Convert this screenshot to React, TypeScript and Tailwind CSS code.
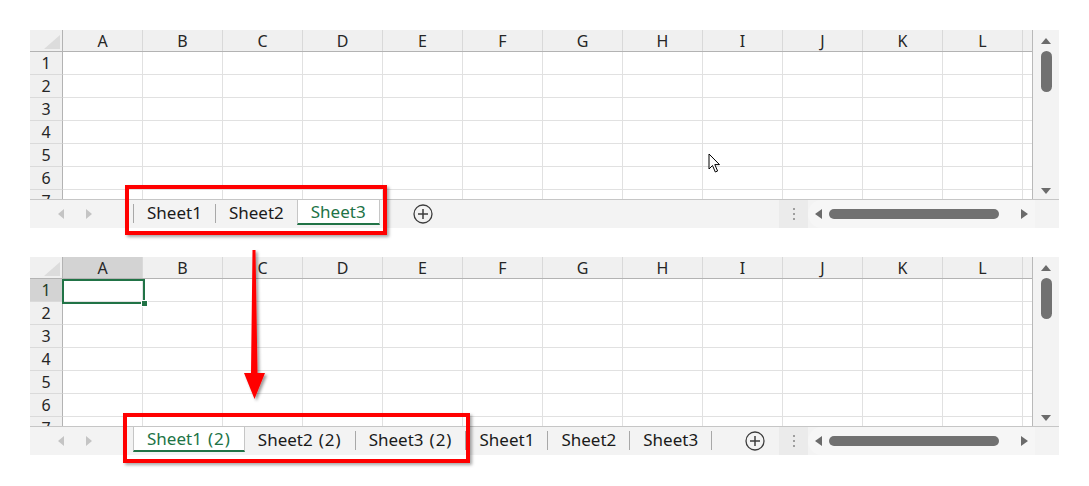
import React from "react";

const COLS = ["A", "B", "C", "D", "E", "F", "G", "H", "I", "J", "K", "L"];
const ROWS = [1, 2, 3, 4, 5, 6, 7];
const FONT = { fontFamily: '"Noto Sans", "Open Sans", Arial, sans-serif' };

type Tab = { name: string; suffix?: string; active?: boolean };

function Tri({ dir, color, w = 7, h = 9 }: { dir: "l" | "r" | "u" | "d"; color: string; w?: number; h?: number }) {
  const pts =
    dir === "l"
      ? `${w},0 ${w},${h} 0,${h / 2}`
      : dir === "r"
      ? `0,0 0,${h} ${w},${h / 2}`
      : dir === "u"
      ? `0,${h} ${w},${h} ${w / 2},0`
      : `0,0 ${w},0 ${w / 2},${h}`;
  return (
    <svg width={w} height={h} viewBox={`0 0 ${w} ${h}`} className="block shrink-0">
      <polygon points={pts} fill={color} />
    </svg>
  );
}

function VScroll() {
  return (
    <div className="w-[26px] shrink-0 bg-[#f3f3f3] flex flex-col items-center pt-[8px] pb-[5px]">
      <Tri dir="u" color="#6b6b6b" w={10} h={6} />
      <div className="mt-[7px] w-[11px] h-[41px] rounded-full bg-[#717171]" />
      <div className="mt-auto">
        <Tri dir="d" color="#6b6b6b" w={10} h={6} />
      </div>
    </div>
  );
}

function Grid({ selected }: { selected?: boolean }) {
  return (
    <div className="relative flex-1 h-[169px] overflow-hidden border-r border-[#b9b9b9] bg-white">
      <div className="flex h-[22px] bg-[#f0f0f0] border-b border-[#b3b3b3]">
        <div className="relative w-[33px] shrink-0 border-r border-[#b3b3b3]">
          <svg width="16" height="14" className="absolute right-[2px] bottom-[2px]">
            <polygon points="16,0 16,14 0,14" fill="#dcdcdc" />
          </svg>
        </div>
        {COLS.map((c) => (
          <div
            key={c}
            className={`w-[80px] shrink-0 border-r border-[#d9d9d9] flex items-center justify-center text-[16px] leading-none text-[#262626] ${
              selected && c === "A" ? "bg-[#d3d3d3]" : ""
            }`}
          >
            {c}
          </div>
        ))}
        <div className="flex-1" />
      </div>
      {ROWS.map((r) => (
        <div key={r} className="flex h-[23px]">
          <div
            className={`w-[33px] shrink-0 border-r border-b border-r-[#b3b3b3] border-b-[#dadada] flex items-center justify-center text-[16px] leading-none ${
              selected && r === 1 ? "bg-[#d3d3d3] text-[#1f3d26]" : "bg-[#f0f0f0] text-[#262626]"
            }`}
          >
            {r}
          </div>
          {COLS.map((c) => (
            <div key={c} className="w-[80px] shrink-0 border-r border-b border-[#e1e1e1]" />
          ))}
          <div className="flex-1 border-b border-[#e1e1e1]" />
        </div>
      ))}
      {selected && (
        <div className="absolute left-[32px] top-[22px] w-[83px] h-[25px] border-2 border-[#217346]">
          <div className="absolute right-[-5px] bottom-[-5px] w-[7px] h-[7px] bg-[#217346] border border-white" />
        </div>
      )}
    </div>
  );
}

function Sep() {
  return <div className="w-px h-[19px] mt-[4px] bg-[#a8a8a8] shrink-0" />;
}

function TabLabel({ t }: { t: Tab }) {
  return (
    <>
      <span>{t.name}</span>
      {t.suffix && <span className="pl-[6px] tracking-[1px]">{t.suffix}</span>}
    </>
  );
}

function TabBar({ tabs }: { tabs: Tab[] }) {
  const items: React.ReactNode[] = [];
  tabs.forEach((t, i) => {
    const prevActive = i > 0 && tabs[i - 1].active;
    if (!t.active && !prevActive) items.push(<Sep key={`s${i}`} />);
    if (t.active) {
      items.push(
        <div
          key={`t${i}`}
          className="h-[25px] shrink-0 px-[13px] bg-white border-l border-r border-[#c6c6c6] border-b-2 border-b-[#217346] flex items-center text-[17px] leading-none text-[#217346] whitespace-nowrap"
        >
          <TabLabel t={t} />
        </div>
      );
    } else {
      items.push(
        <div
          key={`t${i}`}
          className="h-[25px] shrink-0 px-[13px] flex items-center text-[17px] leading-none text-[#1a1a1a] whitespace-nowrap"
        >
          <TabLabel t={t} />
        </div>
      );
    }
  });
  if (!tabs[tabs.length - 1].active) items.push(<Sep key="send" />);

  return (
    <div className="flex h-[29px] bg-[#f3f3f3] border-t border-[#c6c6c6]">
      <div className="w-[103px] shrink-0 flex items-center pl-[28px] gap-[22px] pb-[1px]">
        <Tri dir="l" color="#c4c4c4" w={6} h={10} />
        <Tri dir="r" color="#c4c4c4" w={6} h={10} />
      </div>
      <div className="flex items-start">{items}</div>
      <div className="ml-[33px] flex items-center">
        <svg width="20" height="20" viewBox="0 0 20 20" className="block">
          <circle cx="10" cy="10" r="9" fill="none" stroke="#3c3c3c" strokeWidth="1.3" />
          <line x1="5" y1="10" x2="15" y2="10" stroke="#3c3c3c" strokeWidth="1.5" />
          <line x1="10" y1="5" x2="10" y2="15" stroke="#3c3c3c" strokeWidth="1.5" />
        </svg>
      </div>
      <div className="flex-1" />
      <div className="w-[29px] shrink-0 bg-[#ebebeb] flex flex-col items-center justify-center gap-[3px]">
        <div className="w-[2px] h-[2px] bg-[#9e9e9e]" />
        <div className="w-[2px] h-[2px] bg-[#9e9e9e]" />
        <div className="w-[2px] h-[2px] bg-[#9e9e9e]" />
      </div>
      <div className="w-[227px] shrink-0 bg-[#f6f6f6] rounded-l-full flex items-center pl-[7px]">
        <Tri dir="l" color="#6b6b6b" w={7} h={10} />
        <div className="ml-[7px] w-[170px] h-[10px] rounded-full bg-[#717171]" />
        <div className="ml-[22px]">
          <Tri dir="r" color="#6b6b6b" w={7} h={10} />
        </div>
      </div>
      <div className="w-[24px] shrink-0" />
    </div>
  );
}

function Sheet({ tabs, selected }: { tabs: Tab[]; selected?: boolean }) {
  return (
    <div className="w-[1029px] flex flex-col">
      <div className="flex">
        <Grid selected={selected} />
        <VScroll />
      </div>
      <TabBar tabs={tabs} />
    </div>
  );
}

export default function App() {
  return (
    <div className="relative w-[1089px] h-[486px] bg-white overflow-hidden" style={FONT}>
      <div className="flex flex-col gap-[29px] pl-[30px] pt-[30px]">
        <Sheet tabs={[{ name: "Sheet1" }, { name: "Sheet2" }, { name: "Sheet3", active: true }]} />
        <Sheet
          selected
          tabs={[
            { name: "Sheet1", suffix: "(2)", active: true },
            { name: "Sheet2", suffix: "(2)" },
            { name: "Sheet3", suffix: "(2)" },
            { name: "Sheet1" },
            { name: "Sheet2" },
            { name: "Sheet3" },
          ]}
        />
      </div>

      <div className="absolute left-[125px] top-[185px] w-[262px] h-[50px] border-[4px] border-[#ff0000] shadow-[2px_2px_3px_rgba(0,0,0,0.35)]" />
      <div className="absolute left-[123px] top-[413px] w-[347px] h-[50px] border-[4px] border-[#ff0000] shadow-[2px_2px_3px_rgba(0,0,0,0.35)]" />

      <svg className="absolute left-[236px] top-[245px]" width="40" height="165" viewBox="0 0 40 165">
        <defs>
          <filter id="ds" x="-50%" y="-10%" width="200%" height="130%">
            <feDropShadow dx="2" dy="2" stdDeviation="1.5" floodColor="#000" floodOpacity="0.4" />
          </filter>
        </defs>
        <polygon points="16.5,5 19.5,5 21.5,128 29,128 18.5,154 8,128 15,128" fill="#ff0000" filter="url(#ds)" />
      </svg>

      <svg className="absolute left-[708px] top-[153px]" width="14" height="21" viewBox="0 0 14 21">
        <path
          d="M1 1 L1 16 L4.5 12.5 L7.3 19 L9.6 18 L6.8 11.6 L11.5 11.6 Z"
          fill="#fff"
          stroke="#000"
          strokeWidth="1"
          strokeLinejoin="round"
        />
      </svg>
    </div>
  );
}
